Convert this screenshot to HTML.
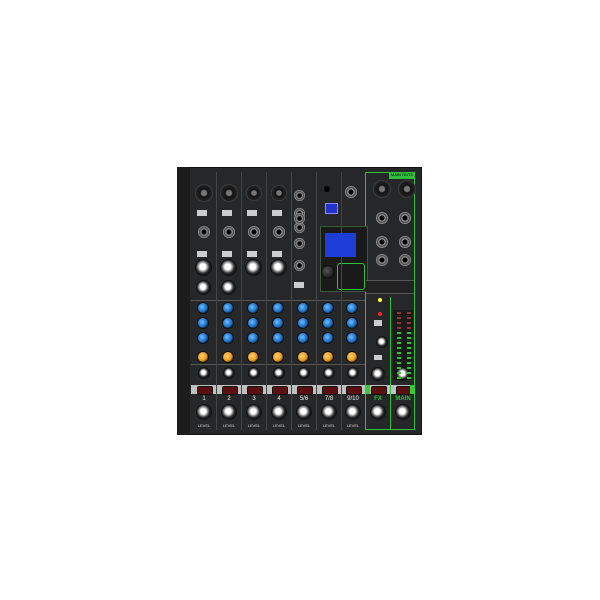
<!DOCTYPE html><html><head><style>
body{margin:0;width:600px;height:600px;background:#fff;position:relative;overflow:hidden;font-family:"Liberation Sans",sans-serif}
.a{position:absolute}
.k{position:absolute;border-radius:50%;background:radial-gradient(circle at 45% 45%,#fff 0 25%,#bbb 35%,#333 55%,#111 70%,#666);box-shadow:0 0 0 1px #111}
.kb{background:radial-gradient(circle at 40% 40%,#6cbcff,#1a70c8 55%,#0a2a4a 75%,#333)}
.ko{background:radial-gradient(circle at 40% 40%,#ffd27a,#e89818 55%,#5a3800 75%,#333)}
.kd{background:radial-gradient(circle at 40% 40%,#555,#222 60%,#000)}
.x{position:absolute;border-radius:50%;background:radial-gradient(circle,#777 0 20%,#111 30%,#222 60%,#555 75%,#222)}
.j{position:absolute;border-radius:50%;background:radial-gradient(circle,#000 0 25%,#999 35%,#444 55%,#aaa 70%,#333)}
.m{position:absolute;width:14px;height:7px;background:#5a1010;border:1px solid #111;border-radius:2px}
.t{position:absolute;color:#ddd;font-size:5px;text-align:center}
</style></head><body>
<div class="a" style="left:177px;top:167px;width:243px;height:266px;background:#262729;border:1px solid #111"></div>
<div class="a" style="left:177px;top:167px;width:13px;height:266px;background:#1c1c1d"></div>
<div class="a" style="left:191px;top:300px;width:174px;height:1px;background:#555"></div>
<div class="a" style="left:191px;top:364px;width:174px;height:1px;background:#555"></div>
<div class="a" style="left:191px;top:385px;width:224px;height:9px;background:#bfc0c0"></div>
<div class="a" style="left:365px;top:172px;width:50px;height:258px;border:1px solid #2fbf3a;box-sizing:border-box"></div>
<div class="a" style="left:390px;top:297px;width:1px;height:133px;background:#2fbf3a"></div>
<div class="a" style="left:389px;top:172px;width:26px;height:7px;background:#2fbf3a;font-size:4px;color:#000;text-align:center">MAIN OUTS</div>
<div class="a" style="left:320px;top:226px;width:46px;height:64px;background:#1a1a1b;border:1px solid #3a5a3a"></div>
<div class="a" style="left:325px;top:233px;width:31px;height:24px;background:#1d3ed6"></div>
<div class="k kd" style="left:322px;top:266px;width:12px;height:12px"></div>
<div class="a" style="left:337px;top:263px;width:26px;height:25px;border:1px solid #2fbf3a;border-radius:3px"></div>
<div class="a" style="left:325px;top:203px;width:11px;height:9px;background:#2233cc;border:1px solid #88f"></div>
<div class="a" style="left:366px;top:280px;width:48px;height:12px;background:#222;border-top:1px solid #555;border-bottom:1px solid #555"></div>
<div class="a" style="left:393px;top:310px;width:20px;height:70px;background:#1a1a1a"></div>
<script>
function d(c,x,y,s,st){var e=document.createElement('div');e.className=c;e.style.left=x+'px';e.style.top=y+'px';if(s){e.style.width=s+'px';e.style.height=s+'px'}if(st)e.style.cssText+=st;document.body.appendChild(e);return e}
var cx=[204,229,254,279,304,329,353];
var lab=['1','2','3','4','5/6','7/8','9/10'];
for(var i=0;i<7;i++){var c=cx[i];
 if(i<6)d('a',c+12,172,0,'width:1px;height:258px;background:#444');
 [308,323,338].forEach(function(y){d('k kb',c-6,y-5,10)});
 d('k ko',c-6,352,10);
 d('k',c-5,368,10);
 d('m',c-7,386);
 var t=d('t',c-10,396,0,'width:20px;font-size:6px;color:#eee');t.textContent=lab[i];
 d('k',c-7,405,14);
 t=d('t',c-10,423,0,'width:20px;font-size:4px');t.textContent='LEVEL';
}
for(var i=0;i<4;i++){var c=cx[i];
 if(i<2)d('x',c-9,184,18);else d('x',c-8,185,16);
 d('a',c-7,210,0,'width:10px;height:6px;background:#ccc');
 d('j',c-6,226,12);d('a',c-7,251,0,'width:10px;height:6px;background:#ccc');
 d('k',c-8,260,15);if(i<2)d('k',c-7,281,13);
}
[186,204,218].forEach(function(y){d('j',294,y+4,11)});d('j',294,213,11);
d('j',294,238,11);d('j',294,260,11);d('a',294,282,0,'width:10px;height:6px;background:#ccc');
d('j',345,186,12);d('a',324,186,0,'width:6px;height:6px;border-radius:50%;background:#000');
d('x',373,180,18);d('x',398,180,18);d('j',376,212,12);d('j',399,212,12);
d('j',376,236,12);d('j',399,236,12);d('j',376,254,12);d('j',399,254,12);
[[378,298,'#ff3'],[378,312,'#f22']].forEach(function(a){d('a',a[0],a[1],0,'width:4px;height:4px;border-radius:50%;background:'+a[2])});
d('a',374,320,0,'width:8px;height:6px;background:#ccc');d('k',377,337,10);d('a',374,355,0,'width:8px;height:5px;background:#ccc');
d('k',372,368,12);d('k',397,368,12);
for(var y=0;y<14;y++){d('a',397,312+y*5,0,'width:4px;height:2px;background:'+(y>3?'#2c2':'#933'));d('a',407,312+y*5,0,'width:4px;height:2px;background:'+(y>3?'#2c2':'#933'))}
d('m',371,386);d('m',396,386);d('a',365,385,0,'width:5px;height:9px;background:#3c3');d('a',410,385,0,'width:5px;height:9px;background:#3c3');
var t=d('t',368,396,0,'width:20px;font-size:6px;color:#2fbf3a;font-weight:bold');t.textContent='FX';
t=d('t',391,396,0,'width:24px;font-size:6px;color:#2fbf3a;font-weight:bold');t.textContent='MAIN';
d('k',371,405,14);d('k',396,405,14);
</script>
</body></html>
